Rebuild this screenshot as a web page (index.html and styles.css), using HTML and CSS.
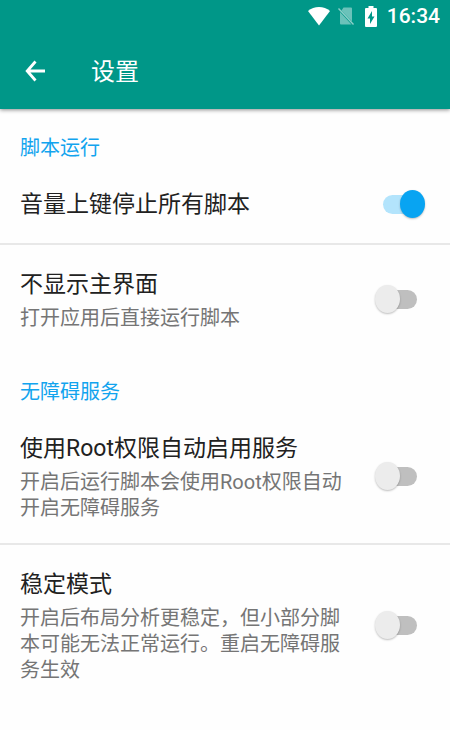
FILE: index.html
```html
<!DOCTYPE html>
<html lang="zh-CN">
<head>
<meta charset="utf-8">
<meta name="viewport" content="width=device-width, initial-scale=1">
<title>设置</title>
<link rel="stylesheet" href="styles.css">
</head>
<body>
<header class="header">
  <div class="status">
    <svg class="icon-wifi" width="22" height="20" viewBox="0 0 22 20" aria-hidden="true"><path fill="currentColor" d="M0 4C6-1.200 16-1.200 22 4L11 18.500z"/></svg>
    <svg class="icon-sim" width="16" height="19" viewBox="0 0 16 19" aria-hidden="true"><path fill="currentColor" opacity=".42" d="M5.500 .5H13q1 0 1 1v13L3.500 3.500zM2 5l11.500 12.500H3q-1 0-1-1z"/><path stroke="currentColor" opacity=".55" stroke-width="1.400" d="M.5 1.500L15.500 17.500"/></svg>
    <svg class="icon-battery" width="12" height="21" viewBox="0 0 12 21" aria-hidden="true"><path fill="currentColor" fill-rule="evenodd" d="M3.500 0h5v2H11q1 0 1 1v17q0 1-1 1H1q-1 0-1-1V3q0-1 1-1h2.500zM7 5l-4.500 7.500H5V18l4.500-7.500H7z"/></svg>
    <time class="clock">16:34</time>
  </div>
  <div class="toolbar">
    <button class="back" type="button" aria-label="返回">
      <svg width="20" height="22" viewBox="0 0 20 22" aria-hidden="true"><path fill="none" stroke="currentColor" stroke-width="2.800" d="M20 11H2M10.500 1.500L2.200 11L10.500 20.500"/></svg>
    </button>
    <h1 class="heading">设置</h1>
  </div>
</header>
<main>
  <section>
    <h2 class="category">脚本运行</h2>
    <label class="row">
      <span class="text"><span class="title">音量上键停止所有脚本</span></span>
      <input class="switch" type="checkbox" role="switch" checked>
    </label>
    <label class="row">
      <span class="text"><span class="title">不显示主界面</span><span class="summary">打开应用后直接运行脚本</span></span>
      <input class="switch" type="checkbox" role="switch">
    </label>
  </section>
  <section>
    <h2 class="category">无障碍服务</h2>
    <label class="row">
      <span class="text"><span class="title">使用Root权限自动启用服务</span><span class="summary">开启后运行脚本会使用Root权限自动开启无障碍服务</span></span>
      <input class="switch" type="checkbox" role="switch">
    </label>
    <label class="row">
      <span class="text"><span class="title">稳定模式</span><span class="summary">开启后布局分析更稳定，但小部分脚本可能无法正常运行。重启无障碍服务生效</span></span>
      <input class="switch" type="checkbox" role="switch">
    </label>
  </section>
</main>
</body>
</html>
```
FILE: styles.css
```css
* {
  box-sizing: border-box;
}

body {
  margin: 0;
  background: #fefefe;
  color: #212121;
  font-family: Roboto, "Noto Sans CJK SC", sans-serif;
}

.header {
  background: #009788;
  color: #fff;
  box-shadow: 0 1px 4px rgba(0, 0, 0, 0.45);
}

.status {
  display: flex;
  align-items: center;
  justify-content: flex-end;
  height: 33px;
  padding-right: 10px;
}

.icon-sim {
  margin: 0 11px 0 8px;
}

.clock {
  margin-left: 10px;
  font-size: 21px;
  font-weight: 500;
  line-height: 33px;
}

.toolbar {
  display: flex;
  align-items: center;
  height: 76px;
  padding: 0 20px;
}

.back {
  display: flex;
  align-items: center;
  width: 71px;
  height: 48px;
  padding: 0 5px;
  border: 0;
  background: none;
  color: inherit;
}

.heading {
  margin: 0;
  padding-top: 2px;
  font-size: 24px;
  font-weight: 400;
  line-height: 32px;
}

.category {
  margin: 0;
  padding: 26px 20px 4px;
  color: #12a4ee;
  font-size: 20px;
  font-weight: 400;
  line-height: 26px;
}

.row {
  display: flex;
  align-items: center;
  justify-content: space-between;
  padding: 22px 25px 22px 20px;
}

.row + .row {
  border-top: 2px solid #e8e8e8;
}

.text {
  display: flex;
  flex-direction: column;
  gap: 4px;
  max-width: 330px;
  padding-top: 2px;
}

.title {
  font-size: 23px;
  line-height: 32px;
}

.summary {
  color: #757575;
  font-size: 20px;
  line-height: 26px;
}

.switch {
  appearance: none;
  display: flex;
  align-items: center;
  flex: none;
  position: relative;
  width: 50px;
  height: 28px;
  margin: 0;
}

.switch::before {
  content: "";
  position: absolute;
  inset: 5px 8px 4px;
  border-radius: 10px;
  background: #bfbfbf;
}

.switch::after {
  content: "";
  position: relative;
  width: 25px;
  height: 28px;
  border-radius: 50%;
  background: #ececec;
  box-shadow: 0 1px 2px rgba(0, 0, 0, 0.25);
}

.switch:checked {
  justify-content: flex-end;
}

.switch:checked::before {
  background: #b3e4fc;
}

.switch:checked::after {
  background: #08a4f2;
}
```
